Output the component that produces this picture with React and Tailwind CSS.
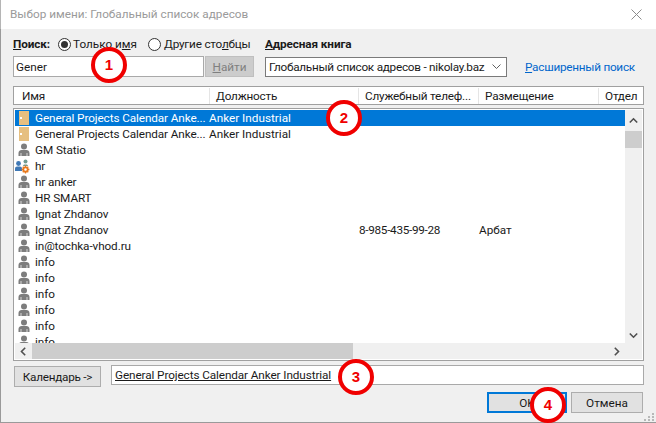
import React from "react";

const rows = [
  { icon: "folder", name: "General Projects Calendar Anke...", title: "Anker Industrial", selected: true },
  { icon: "folder", name: "General Projects Calendar Anke...", title: "Anker Industrial" },
  { icon: "person", name: "GM Statio" },
  { icon: "group", name: "hr" },
  { icon: "person", name: "hr anker" },
  { icon: "person", name: "HR SMART" },
  { icon: "person", name: "Ignat Zhdanov" },
  { icon: "person", name: "Ignat Zhdanov", phone: "8-985-435-99-28", place: "Арбат" },
  { icon: "person", name: "in@tochka-vhod.ru" },
  { icon: "person", name: "info" },
  { icon: "person", name: "info" },
  { icon: "person", name: "info" },
  { icon: "person", name: "info" },
  { icon: "person", name: "info" },
  { icon: "person", name: "info" },
];

const PersonIcon = () => (
  <svg width="12" height="14" viewBox="0 0 12 14" className="shrink-0">
    <circle cx="6" cy="3.5" r="3" fill="#7d7d7d" />
    <path d="M0.5 13v-3c0-1.8 1.6-3 3-3h5c1.4 0 3 1.2 3 3v3z" fill="#7d7d7d" />
    <path d="M3 13v-3M9 13v-3" stroke="#fff" strokeWidth="0.7" />
  </svg>
);

const FolderIcon = () => (
  <div className="w-[10px] h-[14px] ml-[1px] mr-[1px] bg-[#e6bf80] shrink-0 flex items-center pl-[1px]">
    <div className="w-[2px] h-[2px] bg-white" />
  </div>
);

const GroupIcon = () => (
  <svg width="15" height="15" viewBox="0 0 15 15" className="shrink-0 ml-[-3px]">
    <circle cx="3.5" cy="4.5" r="2.4" fill="#3f78b5" />
    <path d="M0 12V9.5C0 8.2 1 7.5 2 7.5h3c1 0 2 .7 2 2V12z" fill="#3f78b5" />
    <circle cx="10.5" cy="2.5" r="2" fill="#6f9c90" />
    <path d="M8 7c0-1 .8-1.6 1.6-1.6h1.8c.8 0 1.6.6 1.6 1.6z" fill="#6f9c90" />
    <circle cx="10.5" cy="10.5" r="2.2" fill="#fff" stroke="#e8791c" strokeWidth="1.8" />
    <path d="M10.5 6.6v1.6M10.5 12.8v1.6M6.6 10.5h1.6M12.8 10.5h1.6M7.7 7.7l1.1 1.1M12.2 12.2l1.1 1.1M13.3 7.7l-1.1 1.1M8.8 12.2l-1.1 1.1" stroke="#e8791c" strokeWidth="1.3" />
  </svg>
);

const RowIcon = ({ type }) => {
  if (type === "folder") return <FolderIcon />;
  if (type === "group") return <GroupIcon />;
  return <PersonIcon />;
};

const Marker = ({ n, className }) => (
  <div
    className={`absolute w-[36px] h-[36px] rounded-full bg-white border-[4px] border-[#f00000] flex items-center justify-center text-[#f00000] text-[15px] font-bold font-['Liberation_Sans',sans-serif] ${className}`}
  >
    {n}
  </div>
);

const Chevron = ({ d }) => (
  <svg width="9" height="9" viewBox="0 0 9 9">
    <path d={d} fill="none" stroke="#505050" strokeWidth="1.6" />
  </svg>
);

const HeaderCell = ({ w, children }) => (
  <div className={`${w} h-full flex items-center pl-[6px] border-r border-[#e5e5e5] whitespace-nowrap overflow-hidden`}>
    {children}
  </div>
);

export default function App() {
  return (
    <div className="relative w-[656px] h-[423px] overflow-hidden flex flex-col bg-white text-[11.75px] leading-[16px] text-[#1a1a1a] font-['Roboto',sans-serif]">
      <div className="h-[29px] shrink-0 flex items-center justify-between pb-[1px] pl-[9px] pr-[14px] bg-white border-l border-[#b5b5b5]">
        <span className="text-[#9a9a9a]">Выбор имени: Глобальный список адресов</span>
        <svg width="11" height="11" viewBox="0 0 11 11">
          <path d="M0.5 0.5l10 10M10.5 0.5l-10 10" stroke="#8c8c8c" strokeWidth="1" />
        </svg>
      </div>

      <div className="flex-1 flex flex-col bg-[#f0f0f0] border-l border-b border-[#9a9a9a] pl-[12px] pr-[11px] relative">
        {/* search labels */}
        <div className="h-[27px] shrink-0 flex items-center pt-[3px]">
          <span className="font-bold w-[45px] tracking-[-0.1px]"><u>П</u>оиск:</span>
          <span className="w-[13px] h-[13px] rounded-full border border-[#333] bg-white flex items-center justify-center">
            <span className="w-[7px] h-[7px] rounded-full bg-[#333]" />
          </span>
          <span className="ml-[2px] w-[75px]">Только и<u>м</u>я</span>
          <span className="w-[13px] h-[13px] rounded-full border border-[#333] bg-white" />
          <span className="ml-[3px] w-[101px] tracking-[-0.2px]">Другие сто<u>л</u>бцы</span>
          <span className="font-bold tracking-[-0.1px]"><u>А</u>дресная книга</span>
        </div>

        {/* search controls */}
        <div className="h-[21px] shrink-0 flex items-center">
          <div className="w-[191px] h-[21px] bg-white border border-[#a9a9a9] flex items-center pl-[2px]">Gener</div>
          <div className="w-[49px] h-[21px] ml-[1px] bg-[#cccccc] border border-[#bfbfbf] flex items-center justify-center text-[#7f7f7f]">
            <span><u>Н</u>айти</span>
          </div>
          <div className="w-[242px] h-[20px] ml-[11px] bg-white border border-[#7a7a7a] flex items-center justify-between pl-[3px] pr-[5px] whitespace-nowrap">
            <span className="tracking-[-0.25px]">Глобальный список адресов - nikolay.baz</span>
            <svg width="9" height="6" viewBox="0 0 9 6" className="shrink-0 ml-[3px]">
              <path d="M0.5 0.5l4 4 4-4" fill="none" stroke="#606060" strokeWidth="1" />
            </svg>
          </div>
          <span className="ml-[18px] text-[#0066cc] whitespace-nowrap tracking-[-0.25px]"><u>Р</u>асширенный поиск</span>
        </div>

        {/* column headers */}
        <div className="mt-[9px] h-[19px] shrink-0 w-[631px] bg-white border border-[#a0a0a0] flex items-center pt-[1px] tracking-[-0.2px]">
          <HeaderCell w="w-[196px] pl-[8px]">Имя</HeaderCell>
          <HeaderCell w="w-[149px]">Должность</HeaderCell>
          <HeaderCell w="w-[120px]">Служебный телеф...</HeaderCell>
          <HeaderCell w="w-[120px]">Размещение</HeaderCell>
          <div className="pl-[6px]">Отдел</div>
        </div>

        {/* list */}
        <div className="mt-[3px] w-[631px] h-[253px] shrink-0 bg-white border border-[#a0a0a0] p-[1px] flex flex-col">
          <div className="flex-1 flex min-h-0">
            <div className="flex-1 min-w-0 overflow-hidden">
              {rows.map((row, i) => (
                <div
                  key={i}
                  className={`h-[16px] flex items-center whitespace-nowrap ${row.selected ? "bg-[#0078d7] text-white" : ""}`}
                >
                  <div className="w-[194px] flex items-center gap-[5px] pl-[3px] tracking-[-0.1px]">
                    <RowIcon type={row.icon} />
                    <span>{row.name}</span>
                  </div>
                  <div className="w-[150px]">{row.title}</div>
                  <div className="w-[120px] tracking-[-0.3px]">{row.phone}</div>
                  <div>{row.place}</div>
                </div>
              ))}
            </div>
            <div className="w-[17px] shrink-0 bg-[#f0f0f0] flex flex-col items-center">
              <div className="h-[21px] flex items-center justify-center"><Chevron d="M0.8 6.5L4.5 2.8l3.7 3.7" /></div>
              <div className="w-full h-[17px] bg-[#cdcdcd]" />
              <div className="flex-1" />
              <div className="h-[16px] flex items-center justify-center"><Chevron d="M0.8 2.5L4.5 6.2l3.7-3.7" /></div>
            </div>
          </div>
          <div className="h-[16px] shrink-0 flex items-stretch bg-[#f0f0f0]">
            <div className="w-[17px] flex items-center justify-center"><Chevron d="M6.2 0.8L2.5 4.5l3.7 3.7" /></div>
            <div className="w-[321px] bg-[#cdcdcd]" />
            <div className="flex-1" />
            <div className="w-[17px] flex items-center justify-center"><Chevron d="M2.8 0.8l3.7 3.7-3.7 3.7" /></div>
            <div className="w-[17px]" />
          </div>
        </div>

        {/* calendar row */}
        <div className="mt-[4px] h-[21px] shrink-0 flex items-start">
          <div className="w-[87px] h-[21px] ml-[1px] mt-[1px] bg-[#e1e1e1] border border-[#adadad] flex items-center justify-center tracking-[-0.25px]">Календарь -&gt;</div>
          <div className="w-[533px] h-[20px] ml-[10px] bg-white border border-[#a9a9a9] flex items-center pl-[3px]">
            <span className="underline tracking-[-0.1px]">General Projects Calendar Anker Industrial</span>
          </div>
        </div>

        {/* dialog buttons */}
        <div className="mt-[6px] w-[630px] flex justify-end gap-[4px]">
          <div className="w-[80px] h-[21px] bg-[#e1e1e1] border-2 border-[#0078d7] flex items-center justify-center">OK</div>
          <div className="w-[72px] h-[21px] bg-[#e1e1e1] border border-[#adadad] flex items-center justify-center">Отмена</div>
        </div>

        <div className="absolute right-[1px] bottom-[1px] grid grid-cols-3 gap-[1px] w-[11px]">
          {[0, 1, 2, 3, 4, 5, 6, 7, 8].map((i) => (
            <div key={i} className={`w-[2px] h-[2px] ${[0, 1, 3].includes(i) ? "" : "bg-[#b8b8b8]"}`} />
          ))}
        </div>
      </div>

      <Marker n="1" className="left-[91px] top-[47px]" />
      <Marker n="2" className="left-[326px] top-[100px]" />
      <Marker n="3" className="left-[338px] top-[359px]" />
      <Marker n="4" className="left-[530px] top-[387px]" />
    </div>
  );
}
